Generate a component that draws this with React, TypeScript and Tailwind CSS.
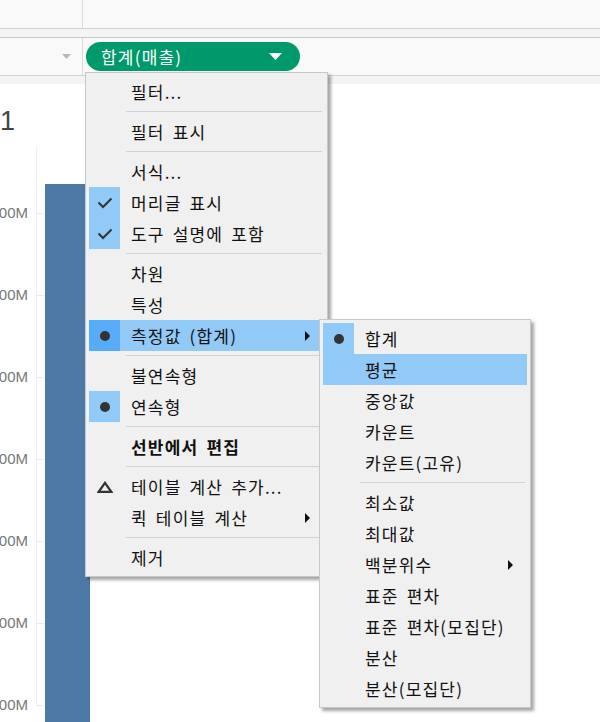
import React from "react";

type Item =
  | { sep: true }
  | {
      sep?: false;
      label: string;
      icon?: "check" | "dot" | "delta";
      iconBg?: string;
      rowBg?: string;
      bold?: boolean;
      sub?: boolean;
    };

const KR = { fontFamily: '"Noto Sans CJK KR", "Noto Sans", sans-serif' };

const mainItems: Item[] = [
  { label: "필터..." },
  { sep: true },
  { label: "필터 표시" },
  { sep: true },
  { label: "서식..." },
  { label: "머리글 표시", icon: "check", iconBg: "bg-[#91c9f7]" },
  { label: "도구 설명에 포함", icon: "check", iconBg: "bg-[#91c9f7]" },
  { sep: true },
  { label: "차원" },
  { label: "특성" },
  { label: "측정값 (합계)", icon: "dot", iconBg: "bg-[#56acf6]", rowBg: "bg-[#91c9f7]", sub: true },
  { sep: true },
  { label: "불연속형" },
  { label: "연속형", icon: "dot", iconBg: "bg-[#91c9f7]" },
  { sep: true },
  { label: "선반에서 편집", bold: true },
  { sep: true },
  { label: "테이블 계산 추가...", icon: "delta" },
  { label: "퀵 테이블 계산", sub: true },
  { sep: true },
  { label: "제거" },
];

const subItems: Item[] = [
  { label: "합계", icon: "dot", iconBg: "bg-[#91c9f7]" },
  { label: "평균", rowBg: "bg-[#91c9f7]" },
  { label: "중앙값" },
  { label: "카운트" },
  { label: "카운트(고유)" },
  { sep: true },
  { label: "최소값" },
  { label: "최대값" },
  { label: "백분위수", sub: true },
  { label: "표준 편차" },
  { label: "표준 편차(모집단)" },
  { label: "분산" },
  { label: "분산(모집단)" },
];

function Icon({ kind }: { kind?: string }) {
  if (kind === "check")
    return (
      <svg width="16" height="12" viewBox="0 0 16 12">
        <path d="M1.5 5.5 L6 10 L14.5 1.5" fill="none" stroke="#333" strokeWidth="2" />
      </svg>
    );
  if (kind === "dot") return <div className="w-[10px] h-[10px] rounded-full bg-[#333]" />;
  if (kind === "delta")
    return (
      <svg width="16" height="12" viewBox="0 0 16 12">
        <path d="M8 1.8 L14.3 10.8 L1.7 10.8 Z" fill="none" stroke="#333" strokeWidth="2.2" />
      </svg>
    );
  return null;
}

function Menu({ items }: { items: Item[] }) {
  return (
    <div className="flex flex-col">
      {items.map((it, i) =>
        it.sep ? (
          <div key={i} className="h-[9px] flex items-center pl-[37px] pr-[2px]">
            <div className="h-px w-full bg-[#d2d2d2]" />
          </div>
        ) : (
          <div key={i} className={`h-[31px] flex items-center ${it.rowBg ?? ""}`}>
            <div className={`w-[31px] h-[31px] flex items-center justify-center shrink-0 ${it.iconBg ?? ""}`}>
              <Icon kind={it.icon} />
            </div>
            <span
              className={`ml-[11px] text-[17px] leading-none tracking-[1.2px] [word-spacing:3px] text-[#111] whitespace-nowrap ${it.bold ? "font-bold" : ""}`}
              style={KR}
            >
              {it.label}
            </span>
            {it.sub && (
              <svg className="ml-auto mr-[14px] shrink-0" width="5" height="10" viewBox="0 0 5 10">
                <path d="M0 0 L5 5 L0 10 Z" fill="#111" />
              </svg>
            )}
          </div>
        )
      )}
    </div>
  );
}

const ticks = ["700M", "600M", "500M", "400M", "300M", "200M", "100M"];

export default function App() {
  return (
    <div className="relative w-[600px] h-[722px] overflow-hidden bg-white">
      {/* top shelf */}
      <div className="h-[29px] flex bg-[#f9f9f9] border-b border-[#d2d2d2]">
        <div className="w-[83px] border-r border-[#dadada]" />
      </div>
      <div className="h-[9px] bg-[#f4f4f4] border-b border-[#c8c8c8]" />
      {/* rows shelf with pill */}
      <div className="h-[38px] flex bg-[#f9f9f9] border-b border-[#d2d2d2]">
        <div className="w-[83px] border-r border-[#dadada] flex items-center justify-end pr-[11px]">
          <svg width="9" height="5" viewBox="0 0 9 5">
            <path d="M0 0 L9 0 L4.5 5 Z" fill="#b8b8b8" />
          </svg>
        </div>
        <div className="pl-[3px] pt-[4px]">
          <div className="w-[214px] h-[29px] rounded-full bg-[#00996b] flex items-center pl-[15px] pr-[18px]">
            <span className="text-[17px] leading-none tracking-[1.2px] text-white" style={KR}>
              합계(매출)
            </span>
            <svg className="ml-auto" width="13" height="7" viewBox="0 0 13 7">
              <path d="M0 0 L13 0 L6.5 7 Z" fill="#fff" />
            </svg>
          </div>
        </div>
      </div>
      <div className="h-[8px] bg-[#f4f4f4]" />

      {/* chart */}
      <div className="relative">
        <div
          className="h-[26px] mt-[24px] text-[27px] leading-[26px] text-[#444] font-light"
          style={{ fontFamily: '"Liberation Sans", Arial, sans-serif' }}
        >
          1
        </div>
        <div className="flex mt-[12px]">
          <div className="w-[36px]" />
          <div className="relative flex-1 border-l border-[#f0f0f0] h-[560px]">
            <div className="absolute left-[8px] top-[38px] w-[45px] h-[600px] bg-[#4e79a7]" />
          </div>
        </div>
        <div className="absolute left-0 right-0 top-[105px] flex flex-col">
          {ticks.map((t) => (
            <div key={t} className="h-[82px] flex items-start">
              <div
                className="w-[28px] h-[20px] -mt-[10px] flex items-center justify-end overflow-hidden whitespace-nowrap text-[15px] text-[#777]"
                style={{ fontFamily: '"Liberation Sans", Arial, sans-serif' }}
              >
                {t}
              </div>
              <div className="ml-[8px] w-[8px] h-px bg-[#ececec]" />
            </div>
          ))}
        </div>
      </div>

      {/* main context menu */}
      <div className="absolute left-[85px] top-[72px] w-[243px] bg-[#f0f0f0] border border-[#c8c8c8] p-[3px] shadow-[3px_3px_3px_rgba(0,0,0,0.35)]">
        <Menu items={mainItems} />
      </div>

      {/* sub menu */}
      <div className="absolute left-[319px] top-[319px] w-[212px] bg-[#f0f0f0] border border-[#c8c8c8] p-[3px] shadow-[3px_3px_3px_rgba(0,0,0,0.35)]">
        <Menu items={subItems} />
      </div>
    </div>
  );
}
